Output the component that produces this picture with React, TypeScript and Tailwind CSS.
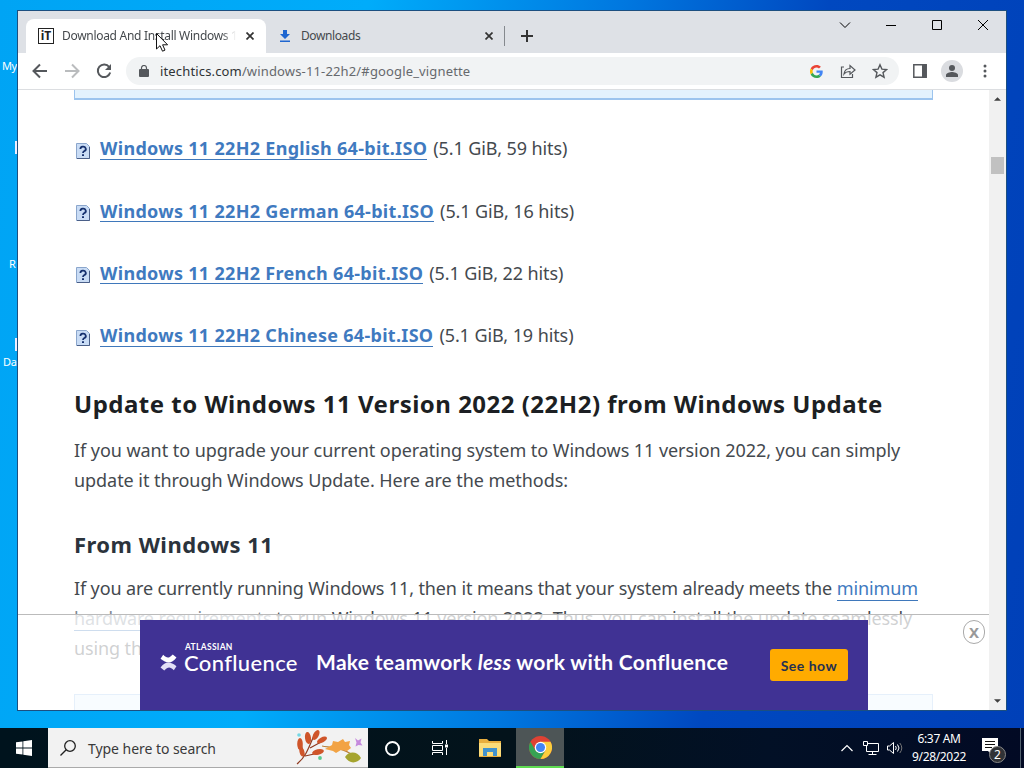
import React from 'react'

interface Download {
  language: string
  hits: number
}

const downloads: Download[] = [
  { language: 'English', hits: 59 },
  { language: 'German', hits: 16 },
  { language: 'French', hits: 22 },
  { language: 'Chinese', hits: 19 },
]

const CloseIcon = ({ className }: { className?: string }) => (
  <svg viewBox="0 0 8 8" className={className} fill="none" stroke="currentColor" strokeWidth="1.7">
    <path d="M0.5 0.5l7 7M7.5 0.5l-7 7" />
  </svg>
)

function TabStrip() {
  return (
    <div className="flex h-[42px] bg-[#dee1e6] pl-2 pt-2">
      <div className="flex h-[34px] w-[240px] items-center rounded-t-lg bg-white pl-3">
        <div className="flex size-4 shrink-0 items-center justify-center border border-[#222] text-[12px] font-bold leading-none text-[#222]">
          iT
        </div>
        <div className="ml-2 w-[174px] overflow-hidden whitespace-nowrap text-[12px] tracking-[-0.3px] text-[#45494d] [mask-image:linear-gradient(to_right,black_92%,transparent)]">
          Download And Install Windows 1
        </div>
        <CloseIcon className="ml-[10px] size-2 text-[#333]" />
      </div>
      <div className="flex h-[34px] w-[238px] items-center pl-[13px]">
        <svg viewBox="0 0 12 14" className="h-[14px] w-3" fill="#1f66d0">
          <path d="M4 1h4v4h3L6 10 1 5h3zM1 11.5h10V13H1z" />
        </svg>
        <div className="ml-[10px] w-[178px] text-[12px] tracking-[-0.4px] text-[#45494d]">Downloads</div>
        <CloseIcon className="ml-[6px] size-2 text-[#333]" />
      </div>
      <div className="mt-[7px] h-5 w-px bg-[#85898e]" />
      <svg viewBox="0 0 12 12" className="ml-[16px] mt-[11px] size-3" stroke="#333" strokeWidth="2">
        <path d="M6 0v12M0 6h12" />
      </svg>
      <div className="ml-auto mr-[18px] flex h-3 items-center text-black">
        <svg viewBox="0 0 12 12" className="mr-[35px] size-3" fill="none" stroke="currentColor">
          <path d="M1 3.5l5 5 5-5" />
        </svg>
        <svg viewBox="0 0 10 12" className="mr-[36px] h-3 w-[10px]" stroke="currentColor">
          <path d="M0 6.5h10" />
        </svg>
        <svg viewBox="0 0 10 10" className="mr-[36px] size-[10px]" fill="none" stroke="currentColor">
          <path d="M.5.5h9v9h-9z" />
        </svg>
        <svg viewBox="0 0 10 10" className="size-[10px]" stroke="currentColor">
          <path d="M0 0l10 10M10 0L0 10" />
        </svg>
      </div>
    </div>
  )
}

function Toolbar() {
  return (
    <div className="flex h-[37px] items-center border-b border-[#dcdee1] bg-white text-[#55585c]">
      <svg viewBox="0 0 16 16" className="ml-[14px] size-4" fill="none" stroke="currentColor" strokeWidth="2">
        <path d="M15 8H2M8 1.5L1.5 8 8 14.5" />
      </svg>
      <svg viewBox="0 0 16 16" className="ml-4 size-4 text-[#babcbe]" fill="none" stroke="currentColor" strokeWidth="2">
        <path d="M1 8h13M8 1.5L14.5 8 8 14.5" />
      </svg>
      <svg viewBox="0 0 16 16" className="ml-4 size-4" fill="none" stroke="currentColor" strokeWidth="2">
        <path d="M13.2 4A6.3 6.3 0 1 0 14.2 9.5" />
        <path d="M15 1v6H9z" fill="currentColor" stroke="none" />
      </svg>
      <div className="ml-[14px] flex h-[28px] w-[773px] items-center rounded-full bg-[#f1f3f4] pl-[13px]">
        <svg viewBox="0 0 10 12" className="h-3 w-[10px]" fill="currentColor">
          <path d="M1 4h8a1 1 0 0 1 1 1v6a1 1 0 0 1-1 1H1a1 1 0 0 1-1-1V5a1 1 0 0 1 1-1z" />
          <path d="M2.5 5V3a2.5 2.5 0 0 1 5 0v2" fill="none" stroke="currentColor" strokeWidth="1.2" />
        </svg>
        <div className="ml-[11px] pt-px text-[13px] tracking-[0.15px] text-[#66696d]">
          <span className="text-[#303336]">itechtics.com</span>/windows-11-22h2/#google_vignette
        </div>
        <svg viewBox="0 0 48 48" className="ml-auto size-[13px]">
          <path fill="#EA4335" d="M24 9.500c3.500 0 6.700 1.200 9.200 3.600l6.900-6.900C35.900 2.400 30.500 0 24 0 14.600 0 6.500 5.400 2.600 13.200l8 6.200C12.400 13.700 17.700 9.500 24 9.500z" />
          <path fill="#4285F4" d="M47 24.500c0-1.600-.2-3.100-.4-4.500H24v9h12.900c-.6 3-2.200 5.500-4.700 7.200l7.700 6C44.400 38 47 31.800 47 24.500z" />
          <path fill="#FBBC05" d="M10.500 28.600a14 14 0 0 1 0-9.200l-8-6.200a24 24 0 0 0 0 21.600z" />
          <path fill="#34A853" d="M24 48c6.500 0 11.900-2.100 15.900-5.800l-7.700-6c-2.200 1.500-4.900 2.300-8.200 2.300-6.300 0-11.600-4.200-13.500-9.900l-8 6.200C6.500 42.600 14.600 48 24 48z" />
        </svg>
        <svg viewBox="0 0 16 16" className="ml-[17px] size-4" fill="none" stroke="currentColor" strokeWidth="1.2">
          <path d="M4 4H1.500v10.500h11V11" />
          <path d="M4 11c.5-4 3-5.500 6-5.500V2.500L15 7l-5 4.200V8.500C7.500 8.500 5.500 9 4 11z" />
        </svg>
        <svg viewBox="0 0 16 16" className="ml-4 mr-[11px] size-4" fill="none" stroke="currentColor" strokeWidth="1.4">
          <path d="M8 1.800l1.900 4.300 4.700.4-3.600 3.100 1.100 4.600L8 11.800l-4.100 2.400L5 9.600 1.400 6.500l4.700-.4z" />
        </svg>
      </div>
      <svg viewBox="0 0 14 14" className="ml-[14px] size-[14px]" fill="none" stroke="currentColor" strokeWidth="1.5">
        <path d="M.8.8h12.400v12.400H.8z" />
        <path d="M9 1h4.500v12H9z" fill="currentColor" stroke="none" />
      </svg>
      <div className="ml-[14px] flex size-[22px] items-center justify-center rounded-full bg-[#dadce0]">
        <svg viewBox="0 0 12 12" className="size-3" fill="currentColor">
          <circle cx="6" cy="3" r="3" />
          <path d="M0 12v-2c0-2 4-3 6-3s6 1 6 3v2z" />
        </svg>
      </div>
      <svg viewBox="0 0 4 14" className="ml-5 h-[14px] w-1" fill="currentColor">
        <circle cx="2" cy="2" r="1.5" />
        <circle cx="2" cy="7" r="1.5" />
        <circle cx="2" cy="12" r="1.5" />
      </svg>
    </div>
  )
}

function DownloadRow({ item }: { item: Download }) {
  return (
    <li className="flex h-[62.3px] items-start whitespace-nowrap text-[18px] leading-[26px]">
      <svg viewBox="0 0 14 16" className="ml-[2px] mr-[10px] mt-[7.3px] h-4 w-[14px]">
        <path d="M.5.5h10l3 3v12H.5z" fill="#c9dcf5" stroke="#8ba6cc" />
        <path d="M13.500 4v11.500H1" fill="none" stroke="#4a5f88" />
        <path d="M4.400 6a2.700 2.300 0 1 1 4 2C7.300 8.700 7 9 7 10" fill="none" stroke="#16316f" strokeWidth="1.8" />
        <path d="M6 11.200h2V13H6z" fill="#16316f" />
      </svg>
      <a className="h-[24.5px] border-b border-[#3f78bb] font-bold tracking-[0.3px] text-[#3f7ac0]">
        Windows 11 22H2 {item.language} 64-bit.ISO
      </a>
      <span className="ml-[6px] tracking-[-0.1px] text-[#44494e]">(5.1 GiB, {item.hits} hits)</span>
    </li>
  )
}

function Article() {
  return (
    <article className="w-[859px] shrink-0 whitespace-nowrap text-[18px] text-[#44494e]">
      <div className="h-[10px] border border-t-0 border-b-2 border-[#9cc4ee] bg-[#e3f2fd]" />
      <ul className="pt-[35.4px]">
        {downloads.map((item) => (
          <DownloadRow key={item.language} item={item} />
        ))}
      </ul>
      <h2 className="mt-[1.4px] text-[24px] font-bold leading-[36px] tracking-[0.49px] text-[#1c1f23]">
        Update to Windows 11 Version 2022 (22H2) from Windows Update
      </h2>
      <p className="mt-[13px] leading-[30px] tracking-[-0.055px]">
        If you want to upgrade your current operating system to Windows 11 version 2022, you can simply
        <br />
        update it through Windows Update. Here are the methods:
      </p>
      <h3 className="mt-[33px] text-[22px] font-bold leading-[32px] tracking-[0.45px] text-[#2b333c]">
        From Windows 11
      </h3>
      <p className="mt-[13px] leading-[30px] tracking-[-0.12px]">
        If you are currently running Windows 11, then it means that your system already meets the{' '}
        <a className="border-b border-[#3f78bb] text-[#3f7ac0]">minimum</a>
        <br />
        <a className="border-b border-[#3f78bb] text-[#7d8894]">hardware requirements</a> to run Windows 11 version 2022. Thus, you can install the update seamlessly
        <br />
        using the
      </p>
      <div className="mt-[31px] h-10 border border-[#9cc4ee] bg-[#e3f2fd]" />
    </article>
  )
}

function AdBanner() {
  return (
    <div className="absolute bottom-0 left-0 flex h-[96px] w-[971px] border-t border-[#bbb] bg-white/75 pt-[5px]">
      <div className="ml-[122px] flex w-[728px] items-center bg-[#403294] font-['Lato'] text-white">
        <svg viewBox="0 0 16 16" className="ml-5 mt-[-5px] size-[17px]">
          <path d="M.5 4.500L3 .8c3.500 3.500 5.500 3.500 9-.3l3.500 2.800c-4.500 6-9 6-15 1.200z" fill="#fff" />
          <path d="M15.500 11.500L13 15.200c-3.500-3.500-5.500-3.500-9 .3L.5 12.700c4.500-6 9-6 15-1.200z" fill="#e3dff7" />
        </svg>
        <div className="-mt-3 ml-[7px] w-[116px]">
          <div className="ml-px text-[8.5px] font-bold leading-[8px] tracking-[0.3px]">ATLASSIAN</div>
          <div className="text-[22px] font-medium leading-[24px] tracking-[0.35px]">Confluence</div>
        </div>
        <div className="-mt-1.5 ml-4 w-[454px] whitespace-nowrap text-[21px] font-bold tracking-[0.32px]">
          Make teamwork <em>less</em> work with Confluence
        </div>
        <div className="flex h-8 w-[78px] items-center justify-center rounded-[3px] bg-[#ffab00] text-[14px] font-bold tracking-[0.5px] text-[#253050]">
          See how
        </div>
      </div>
      <div className="ml-[95px] flex h-6 w-[22px] items-center justify-center rounded-full border border-[#aaa] bg-white font-['Noto_Sans'] text-[15px] font-bold text-[#999]">
        X
      </div>
    </div>
  )
}

function Scrollbar() {
  return (
    <div className="flex w-[17px] flex-col items-center bg-[#f1f1f1]">
      <svg viewBox="0 0 8 4" className="mt-[7px] h-1 w-[7px]" fill="#404040">
        <path d="M4 0l4 4H0z" />
      </svg>
      <div className="mt-[56px] h-[17px] w-[13px] bg-[#c1c1c1]" />
      <svg viewBox="0 0 8 4" className="mb-[7px] mt-auto h-1 w-[7px]" fill="#404040">
        <path d="M4 4l4-4H0z" />
      </svg>
    </div>
  )
}

function Leaves() {
  return (
    <svg viewBox="0 0 70 38" className="ml-auto mr-1 h-[38px] w-[70px]">
      <g fill="none" stroke="#8f3a20" strokeWidth="1.2">
        <path d="M3 35C12 28 15 18 21 4M10 28L7 14M16 19l11-6M11 27l14-3" />
        <path d="M28 17c12 2 24 2 34 12" stroke="#b9803b" />
      </g>
      <g fill="#cf552a">
        <ellipse cx="14" cy="9" rx="3" ry="6" transform="rotate(-8 14 9)" />
        <ellipse cx="6" cy="15" rx="2.8" ry="6" />
        <ellipse cx="22" cy="6" rx="2.8" ry="5.5" transform="rotate(28 22 6)" />
        <ellipse cx="28" cy="11" rx="5.500" ry="2.600" transform="rotate(-28 28 11)" />
        <ellipse cx="24" cy="23" rx="6" ry="2.700" transform="rotate(-12 24 23)" />
        <ellipse cx="8" cy="23" rx="2.400" ry="4.500" transform="rotate(-16 8 23)" />
      </g>
      <path d="M31 20l7-4 1-4 5 1 5-3 2 3 5-1-1 4 2 3-4 3-6-1-5 3-3-2z" fill="#f2a344" />
      <path d="M51 28c4-6 12-6 16 1-4 6-12 6-16-1z" fill="#a5a42f" />
      <path d="M61 9l3 2.500 3.500-2-1 4 2 3-4-.5-3 1.500 1-4z" fill="#c58add" />
      <circle cx="5" cy="6" r="1.8" fill="#73d8e5" />
      <circle cx="26" cy="29" r="1.9" fill="#59c990" />
    </svg>
  )
}

function Taskbar() {
  return (
    <footer className="flex h-10 bg-[linear-gradient(to_right,#00131d,#03131b_50%,#021026_75%,#020a24)] text-white">
      <div className="flex w-12 items-center justify-center">
        <svg viewBox="0 0 16 16" className="size-4" fill="#fff">
          <path d="M0 2.300l6.500-.9v6.100H0zM7.300 1.300L16 0v7.500H7.300zM0 8.400h6.500v6.200L0 13.700zM7.300 8.400H16V16l-8.700-1.300z" />
        </svg>
      </div>
      <div className="flex h-10 w-[320px] items-center border-b border-[#aaa] bg-[#f2f2f2] pl-3 text-[14px] text-[#3a3a3a]">
        <svg viewBox="0 0 16 16" className="size-4" fill="none" stroke="#222" strokeWidth="1.3">
          <circle cx="10" cy="6" r="5.3" />
          <path d="M6.200 9.800L.5 15.500" />
        </svg>
        <span className="ml-3 whitespace-nowrap pt-0.5 tracking-[-0.05px]">Type here to search</span>
        <Leaves />
      </div>
      <div className="flex w-12 items-center justify-center">
        <div className="size-[15px] rounded-full border-2 border-white" />
      </div>
      <div className="flex w-12 items-center justify-center">
        <svg viewBox="0 0 16 16" className="size-4" fill="none" stroke="#fff">
          <path d="M.5 1v2.500h10V1M.5 15v-2.500h10V15M.5 5.500h10v5H.5zM14.500 0v4M14.500 8v7" />
          <path d="M13 4.500h3v3h-3z" fill="#fff" stroke="none" />
        </svg>
      </div>
      <div className="flex w-[52px] items-center justify-center">
        <svg viewBox="0 0 22 18" className="h-[18px] w-[22px]">
          <path d="M0 0h8l2 2h12v16H0z" fill="#e9ae3e" />
          <path d="M0 4h22v13H0z" fill="#fcdc79" />
          <path d="M4 17V9h14v8h-4v-4H8v4z" fill="#4192cd" />
        </svg>
      </div>
      <div className="flex w-12 items-center justify-center border-b-2 border-[#5edb51] bg-[#4d5556]">
        <svg viewBox="0 0 24 24" className="size-[23px]">
          <circle cx="12" cy="12" r="12" fill="#de4234" />
          <path d="M1.600 6A12 12 0 0 0 12 24l5.200-9-10.400 0z" fill="#36a354" />
          <path d="M12 24A12 12 0 0 0 22.400 6H12l5.200 9z" fill="#fbce3d" />
          <circle cx="12" cy="12" r="6" fill="#fff" />
          <circle cx="12" cy="12" r="4.7" fill="#4285f4" />
        </svg>
      </div>
      <div className="ml-auto flex items-center">
        <svg viewBox="0 0 12 8" className="h-2 w-3" fill="none" stroke="#fff" strokeWidth="1.2">
          <path d="M.5 7L6 1.500 11.500 7" />
        </svg>
        <svg viewBox="0 0 16 14" className="ml-[10px] h-[14px] w-4" fill="none" stroke="#fff">
          <path d="M5 2.500h10.500v8H3.500V5M9.500 10.500v3M5.500 13.500h8M.5.500h4v4h-4z" />
        </svg>
        <svg viewBox="0 0 16 14" className="ml-2 h-[14px] w-4" fill="none" stroke="#fff">
          <path d="M.5 5v4h2l4 3.500v-11L2.500 5zM8.500 5q1.500 2 0 4M10.500 3.500q3 3.500 0 7" />
          <path d="M12.800 2q4 5 0 10" stroke="#777" />
        </svg>
        <div className="ml-2 w-[56px] whitespace-nowrap text-center text-[12px] leading-[18px] tracking-[-0.35px]">
          <div>6:37 AM</div>
          <div>9/28/2022</div>
        </div>
        <div className="relative ml-[15px] mr-[14px] h-6 w-[24px]">
          <svg viewBox="0 0 24 24" className="size-6">
            <path d="M0 2h16v13h-6v4l-4-4H0z" fill="#fff" />
            <path d="M3 5.500h10M3 8.500h10M3 11.500h7" stroke="#111" />
          </svg>
          <div className="absolute left-[7px] top-[10px] flex size-[17px] items-center justify-center rounded-full border border-[#888] bg-[#303236] text-[12px]">
            2
          </div>
        </div>
        <div className="h-10 w-px bg-[#52606e]" />
        <div className="w-[3px]" />
      </div>
    </footer>
  )
}

function DesktopLabels() {
  return (
    <div className="h-full w-[18px] shrink-0 overflow-hidden whitespace-nowrap pt-[58px] text-[11px] leading-[16px] text-white">
      <div className="ml-[2px] tracking-[-0.5px]">My</div>
      <div className="ml-[15px] mt-[67px] h-[13px] w-1 bg-[#eef]" />
      <div className="ml-[9px] mt-[102px]">R</div>
      <div className="ml-[15px] mt-[66px] h-[13px] w-1 bg-[#eef]" />
      <div className="ml-[3px] mt-[3px] tracking-[-0.3px]">Da</div>
    </div>
  )
}

export default function App() {
  return (
    <div className="relative flex h-[768px] w-[1024px] flex-col overflow-hidden font-['Noto_Sans',sans-serif]">
      <main className="flex h-[728px] bg-[linear-gradient(100deg,#00a4f4_0%,#00acfa_32%,#0078e0_54%,#0048c0_72%,#0040b8_100%)]">
        <DesktopLabels />
        <div className="mt-[10px] flex h-[701px] w-[990px] -translate-x-px flex-col border border-[#1c4f80] bg-white">
          <TabStrip />
          <Toolbar />
          <div className="relative flex h-[620px] overflow-hidden">
            <div className="h-full w-[971px] overflow-hidden pl-14">
              <Article />
            </div>
            <Scrollbar />
            <AdBanner />
          </div>
        </div>
      </main>
      <Taskbar />
      <svg viewBox="0 0 12 19" className="absolute left-[156px] top-[33px] h-[19px] w-3">
        <path d="M.5.500v15.500l3.500-3.300 2.500 5.500 2.500-1.100-2.400-5.300h5z" fill="#fff" stroke="#111" />
      </svg>
    </div>
  )
}
